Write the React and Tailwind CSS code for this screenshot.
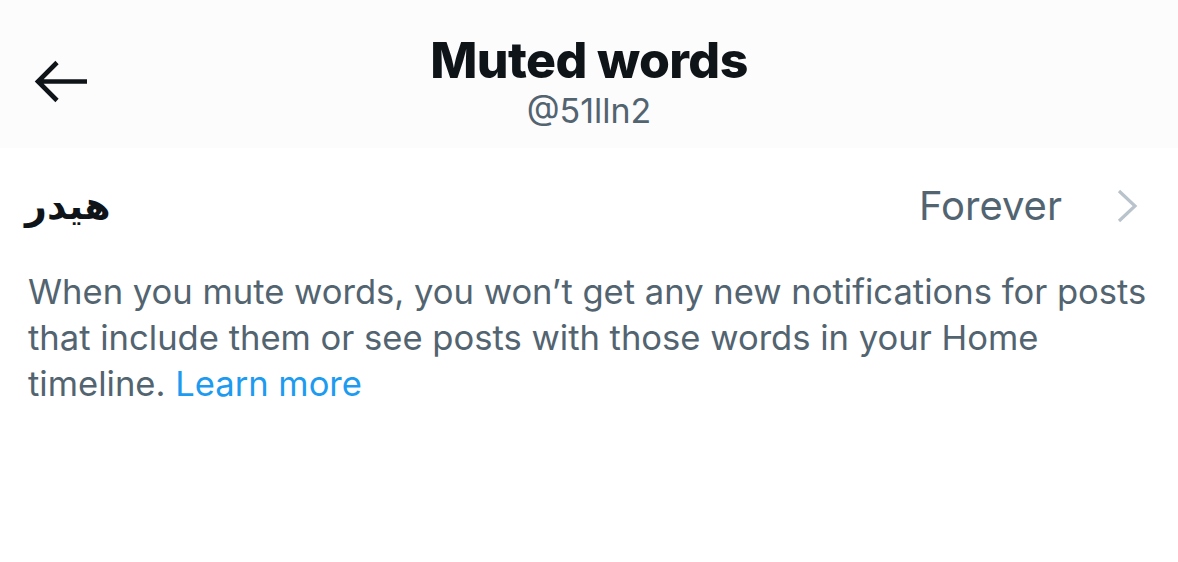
import React from "react";

export default function App() {
  const font = { fontFamily: "Inter, 'DejaVu Sans', sans-serif" };
  return (
    <div className="w-[1178px] h-[562px] bg-white overflow-hidden" style={font}>
      <div className="relative h-[148px] bg-[#fcfcfd] flex flex-col items-center">
        <button className="absolute left-[33px] top-[58px] w-[56px] h-[48px] flex items-center justify-center">
          <svg width="56" height="48" viewBox="0 0 56 48" fill="none">
            <path d="M54 23.5H6M24 4.5L5 23.5l19 19" stroke="#0f1419" strokeWidth="4.6" strokeLinecap="butt" strokeLinejoin="miter" />
          </svg>
        </button>
        <div className="mt-[27px] text-[50px] leading-[66px] font-extrabold text-[#0f1419] tracking-[-0.6px]">Muted words</div>
        <div className="-mt-[2px] text-[34px] leading-[40px] text-[#536471]">@51lln2</div>
      </div>
      <div className="flex items-center justify-between pl-[25px] pr-[38px] h-[116px]">
        <div className="text-[38px] font-bold text-[#0f1419] leading-none" dir="rtl" style={{ fontFamily: "'DejaVu Sans', sans-serif" }}>هيدر</div>
        <div className="flex items-center gap-[54px]">
          <span className="text-[40px] text-[#536471]">Forever</span>
          <svg width="24" height="36" viewBox="0 0 24 36" fill="none">
            <path d="M3 3l16 15L3 33" stroke="#b9c3cb" strokeWidth="3.2" />
          </svg>
        </div>
      </div>
      <p className="px-[28px] text-[34.6px] leading-[46px] text-[#536471] mt-[4px]">
        When you mute words, you won’t get any new notifications for posts that include them or see posts with those words in your Home timeline. <span className="text-[#1d9bf0]">Learn more</span>
      </p>
    </div>
  );
}
